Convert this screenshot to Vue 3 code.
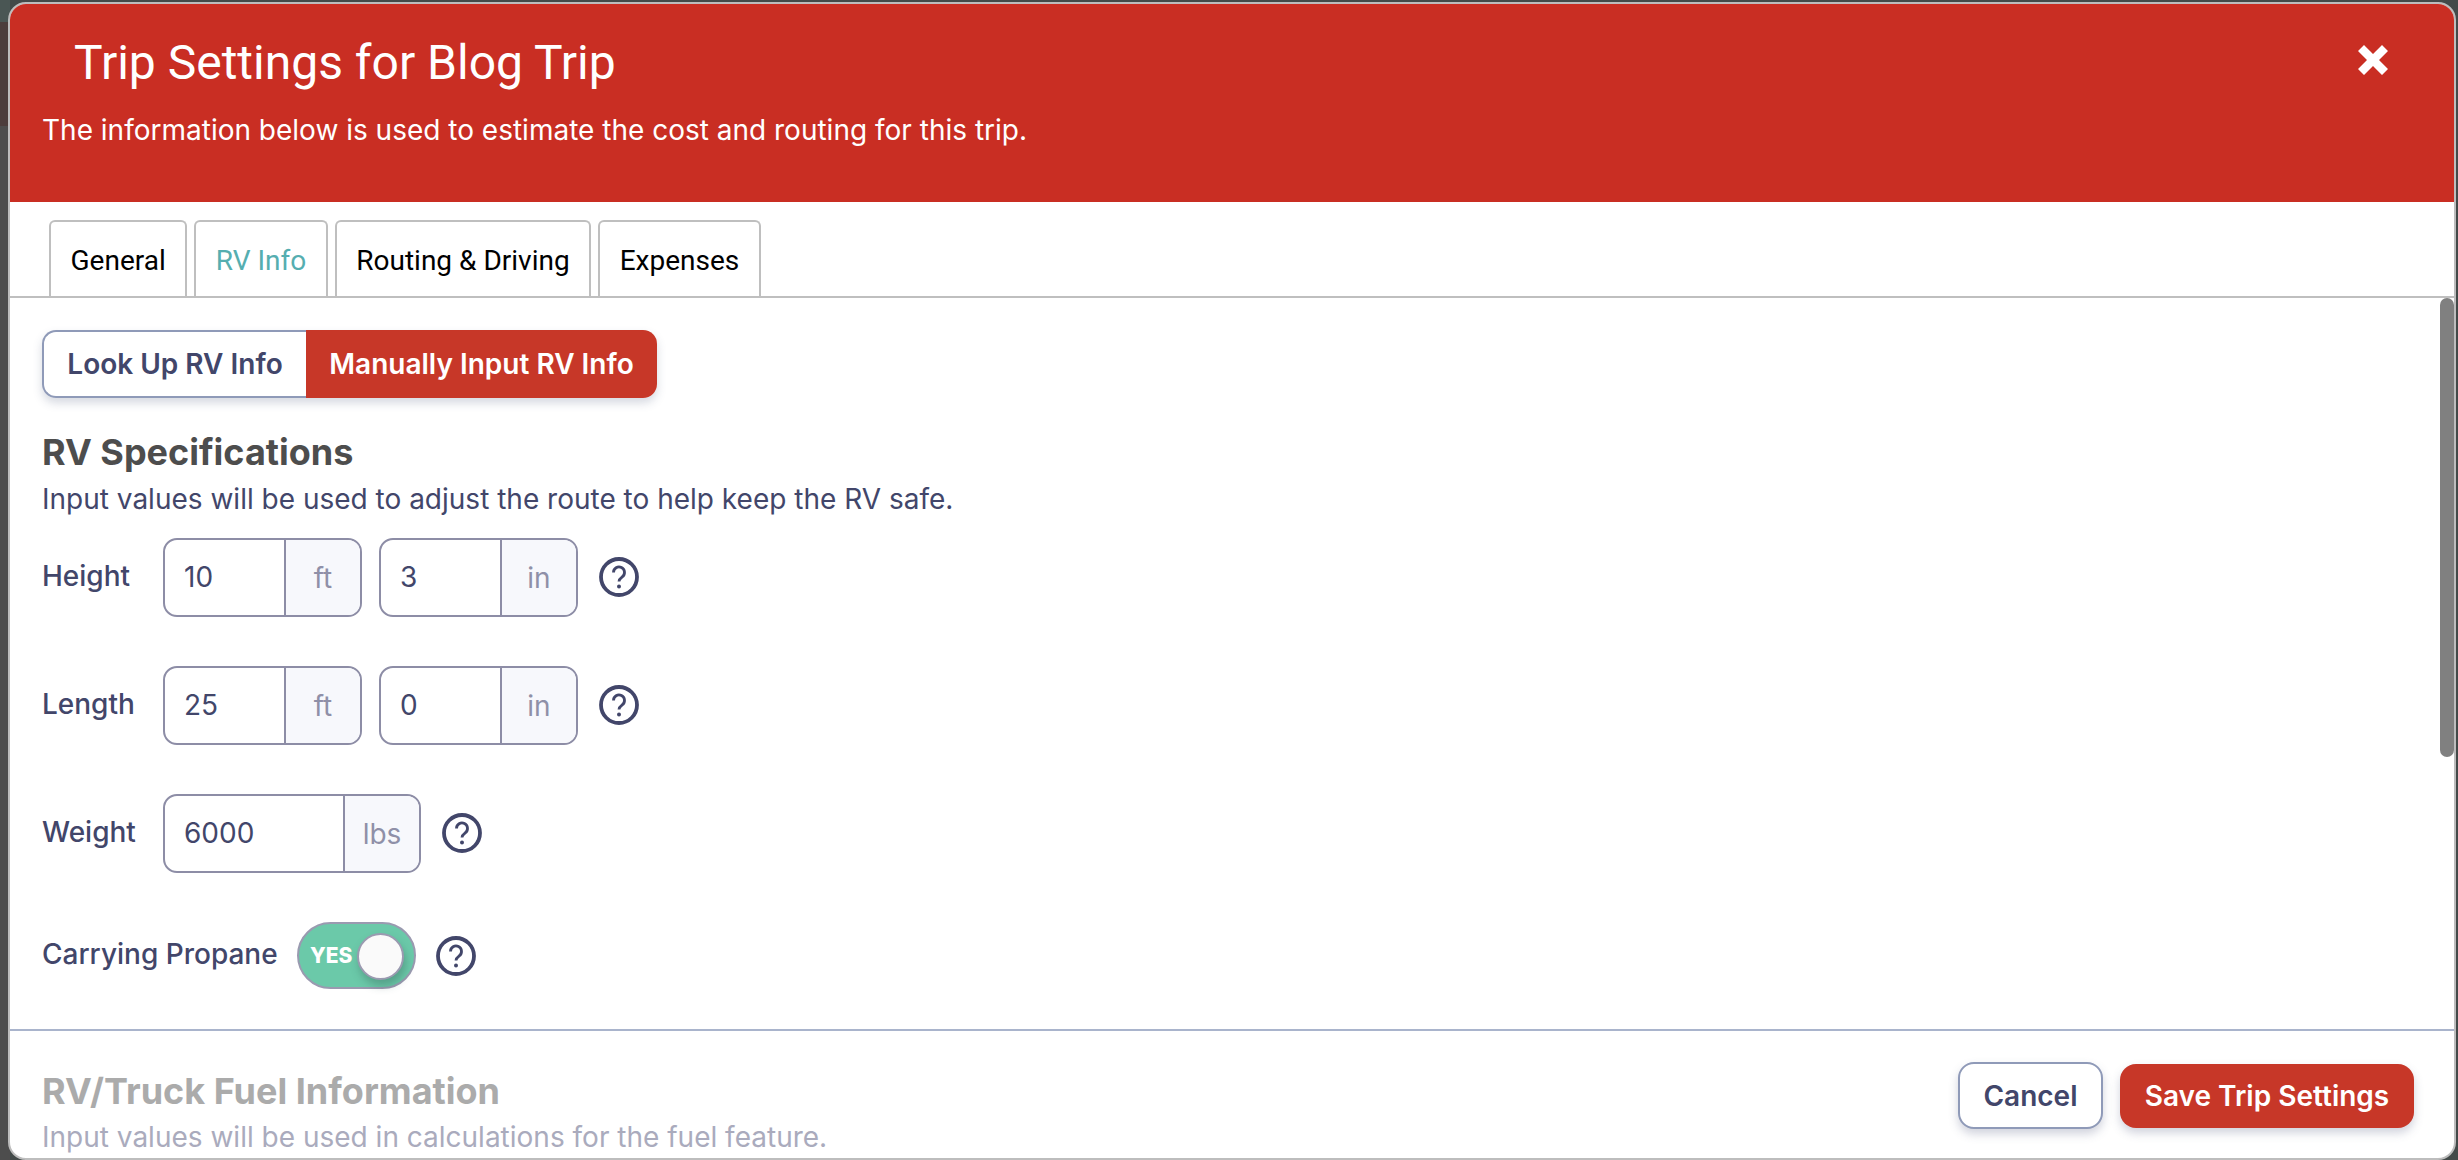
<script setup>
const rows = [
  { label: 'Height', fields: [{ value: '10', unit: 'ft' }, { value: '3', unit: 'in' }] },
  { label: 'Length', fields: [{ value: '25', unit: 'ft' }, { value: '0', unit: 'in' }] },
  { label: 'Weight', fields: [{ value: '6000', unit: 'lbs', wide: true }] },
]
const tabs = ['General', 'RV Info', 'Routing & Driving', 'Expenses']
</script>

<template>
  <div class="page">
    <div class="modal">
      <header class="head">
        <h1 class="title">Trip Settings for Blog Trip</h1>
        <p class="sub">The information below is used to estimate the cost and routing for this trip.</p>
        <svg class="close" viewBox="1 1 30 30" aria-label="Close">
          <path d="M7 1 16 10 25 1 31 7 22 16 31 25 25 31 16 22 7 31 1 25 10 16 1 7Z" fill="#fff" />
        </svg>
      </header>

      <nav class="tabs">
        <button v-for="t in tabs" :key="t" class="tab" :class="{ active: t === 'RV Info' }">{{ t }}</button>
      </nav>

      <div class="body">
        <div class="scroll">
          <div class="segment">
            <span class="seg seg-off">Look Up RV Info</span>
            <span class="seg seg-on">Manually Input RV Info</span>
          </div>

          <h2 class="section">RV Specifications</h2>
          <p class="desc">Input values will be used to adjust the route to help keep the RV safe.</p>

          <div v-for="r in rows" :key="r.label" class="row">
            <span class="label">{{ r.label }}</span>
            <div v-for="f in r.fields" :key="f.unit" class="field" :class="{ wide: f.wide }">
              <span class="value">{{ f.value }}</span>
              <span class="unit">{{ f.unit }}</span>
            </div>
            <svg class="help help-field" viewBox="0 0 40 40">
              <circle cx="20" cy="20" r="18" fill="none" stroke="#42466a" stroke-width="3.8" />
              <path d="M14.5 15.5a5.5 5.5 0 1 1 8.7 4.4c-2 1.5-3.2 2.3-3.2 4.6" fill="none" stroke="#42466a" stroke-width="2.8" />
              <circle cx="20" cy="29.5" r="2" fill="#42466a" />
            </svg>
          </div>

          <div class="row row-toggle">
            <span class="label label-toggle">Carrying Propane</span>
            <div class="toggle">
              <span class="yes">YES</span>
              <span class="knob"></span>
            </div>
            <svg class="help" viewBox="0 0 40 40">
              <circle cx="20" cy="20" r="18" fill="none" stroke="#42466a" stroke-width="3.8" />
              <path d="M14.5 15.5a5.5 5.5 0 1 1 8.7 4.4c-2 1.5-3.2 2.3-3.2 4.6" fill="none" stroke="#42466a" stroke-width="2.8" />
              <circle cx="20" cy="29.5" r="2" fill="#42466a" />
            </svg>
          </div>

          <hr class="rule" />

          <h2 class="section muted">RV/Truck Fuel Information</h2>
          <p class="desc desc-muted">Input values will be used in calculations for the fuel feature.</p>
        </div>

        <div class="scrollbar"></div>

        <div class="actions">
          <button class="btn cancel">Cancel</button>
          <button class="btn save">Save Trip Settings</button>
        </div>
      </div>
    </div>
  </div>
</template>

<style>
html, body { margin: 0; overflow: hidden; }
</style>

<style scoped>
* { box-sizing: border-box; }
.page {
  width: 2458px;
  height: 1160px;
  padding: 2px 2px 0 8px;
  background:
    linear-gradient(to bottom, #4a5654 0 22px, #4c3d3c 22px 126px, #4d4d4d 126px) left / 10px 100% no-repeat,
    #434a49;
  font-family: Inter, "Liberation Sans", sans-serif;
  overflow: hidden;
}
.modal {
  height: 1158px;
  border: 2px solid #bdbdbd;
  border-radius: 18px;
  background: #fff;
  overflow: hidden;
  display: flex;
  flex-direction: column;
}
.head {
  position: relative;
  flex: none;
  height: 198px;
  padding: 29px 32px 0;
  background: #c92e23;
  color: #fff;
}
.title {
  margin: 0 0 0 32px;
  font: 400 48px/60px Roboto, sans-serif;
}
.sub {
  margin: 17px 0 0;
  font: 400 28px/40px Inter, sans-serif;
}
.close {
  position: absolute;
  right: 66px;
  top: 41px;
  width: 30px;
  height: 30px;
}
.tabs {
  flex: none;
  height: 96px;
  padding: 18px 0 0 39px;
  display: flex;
  gap: 7px;
  align-items: stretch;
  border-bottom: 2px solid #bfbfbf;
}
.tab {
  padding: 3px 19.5px 0;
  border: 2px solid #bfbfbf;
  border-bottom: 0;
  border-radius: 6px 6px 0 0;
  background: #fff;
  color: #000;
  font: 400 28px/1 Roboto, sans-serif;
}
.tab.active {
  height: 76px;
  margin-bottom: -2px;
  color: #55aeb0;
}
.body {
  position: relative;
  flex: 1;
  min-height: 0;
  overflow: hidden;
}
.scroll {
  height: 100%;
  padding: 32px 0 0;
}
.segment {
  display: flex;
  width: 615px;
  height: 68px;
  margin-left: 32px;
  border-radius: 14px;
  box-shadow: 0 5px 10px rgba(70, 80, 120, .22);
}
.seg {
  display: flex;
  align-items: center;
  justify-content: center;
  font-size: 28px;
  font-weight: 600;
}
.seg-off {
  width: 264px;
  color: #42466a;
  background: #fff;
  border: 2px solid #8f9ab8;
  border-right: 0;
  border-radius: 14px 0 0 14px;
}
.seg-on {
  flex: 1;
  color: #fff;
  background: #c73728;
  border-radius: 0 14px 14px 0;
}
.section {
  margin: 32px 0 0 32px;
  font-size: 36px;
  line-height: 44px;
  font-weight: 700;
  color: #4d4d4d;
}
.section.muted { margin-top: 38px; color: #ababab; }
.desc {
  margin: 8px 0 0 32px;
  font-size: 28px;
  line-height: 34px;
  color: #42466a;
}
.desc-muted { color: #aaabbd; margin-top: 7px; }
.row {
  display: flex;
  align-items: center;
  height: 80px;
  margin: 21px 0 0 32px;
  position: relative;
}
.row + .row { margin-top: 48px; }
.label {
  width: 121px;
  flex: none;
  margin-top: -3px;
  font-size: 28px;
  font-weight: 500;
  color: #42466a;
}
.field {
  display: flex;
  width: 199px;
  height: 79px;
  margin-right: 17px;
  border: 2px solid #8d8da6;
  border-radius: 14px;
  overflow: hidden;
  font-size: 28px;
}
.field.wide { width: 258px; }
.value {
  flex: 1;
  padding-left: 19px;
  line-height: 75px;
  color: #42466a;
}
.unit {
  width: 76px;
  flex: none;
  border-left: 2px solid #8d8da6;
  background: #f7f8fc;
  color: #8f90a8;
  text-align: center;
  line-height: 77px;
}
.help {
  width: 40px;
  height: 40px;
  flex: none;
}
.help-field { margin-left: 4px; }
.row-toggle { height: 67px; margin-top: 49px !important; }
.label-toggle { width: 255px; }
.toggle {
  position: relative;
  width: 119px;
  height: 67px;
  margin-right: 20px;
  flex: none;
  border: 2px solid #9a9ab0;
  border-radius: 34px;
  background: #6bc9a9;
}
.yes {
  position: absolute;
  left: 11px;
  top: 0;
  line-height: 63px;
  color: #fff;
  font-size: 21px;
  font-weight: 800;
}
.knob {
  position: absolute;
  left: 58px;
  top: 9px;
  width: 47px;
  height: 47px;
  border: 2px solid #9a9ab0;
  border-radius: 50%;
  background: #fafafa;
  box-shadow: 2px 6px 8px rgba(50, 90, 80, .35);
}
.rule {
  margin: 40px 0 0;
  border: 0;
  border-top: 2px solid #a9b4cc;
}
.scrollbar {
  position: absolute;
  right: 0;
  top: 0;
  width: 14px;
  height: 459px;
  border-radius: 7px;
  background: #808080;
}
.actions {
  position: absolute;
  right: 40px;
  bottom: 29px;
  display: flex;
  align-items: center;
  gap: 17px;
}
.btn {
  font-family: Inter, sans-serif;
  font-size: 28px;
  font-weight: 600;
  border-radius: 16px;
  box-shadow: 0 5px 10px rgba(70, 80, 120, .25);
}
.cancel {
  width: 145px;
  height: 67px;
  border: 2px solid #8f9ab8;
  background: #fff;
  color: #42466a;
}
.save {
  width: 294px;
  height: 64px;
  border: 0;
  background: #c73728;
  color: #fff;
}
</style>
